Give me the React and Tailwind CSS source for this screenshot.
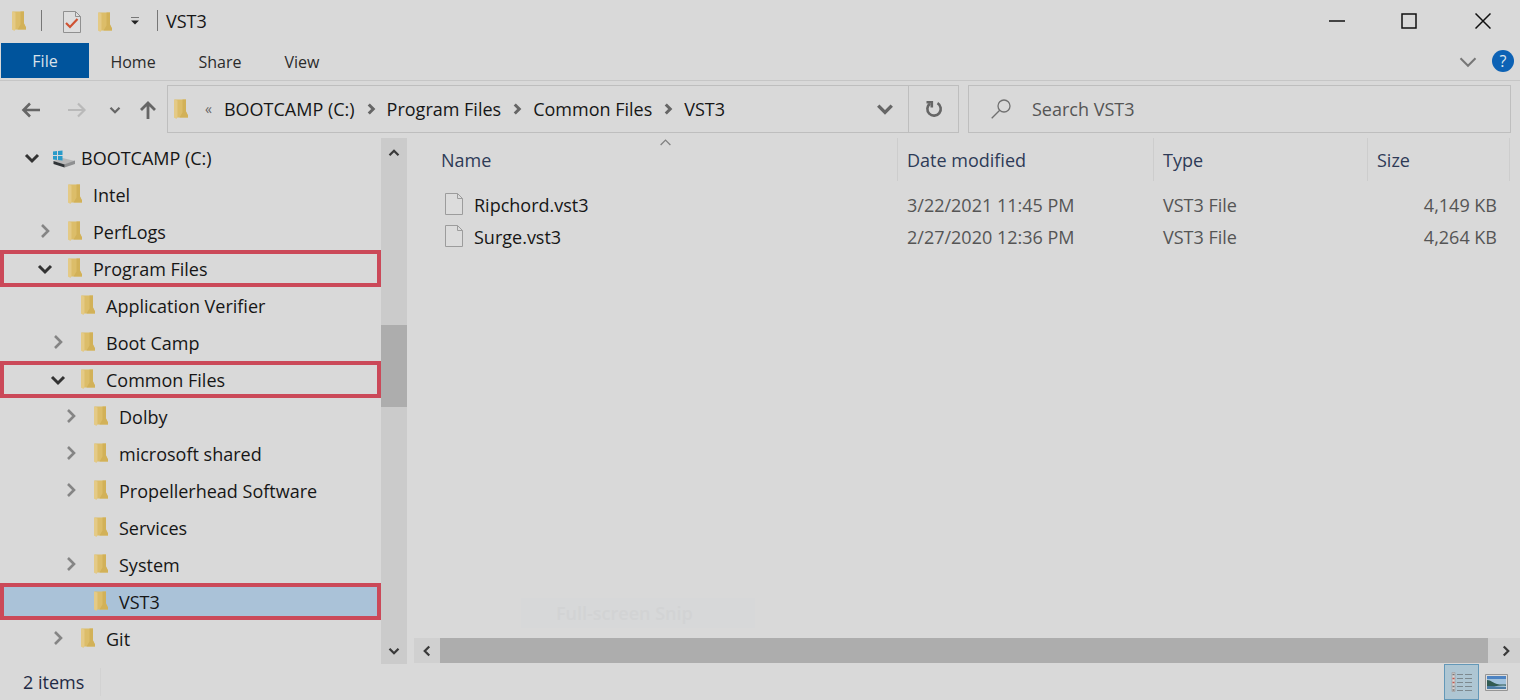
import React from "react";

const TREE = [
  { label: "BOOTCAMP (C:)", level: 0, state: "open", drive: true },
  { label: "Intel", level: 1 },
  { label: "PerfLogs", level: 1, state: "closed" },
  { label: "Program Files", level: 1, state: "open", marked: true },
  { label: "Application Verifier", level: 2 },
  { label: "Boot Camp", level: 2, state: "closed" },
  { label: "Common Files", level: 2, state: "open", marked: true },
  { label: "Dolby", level: 3, state: "closed" },
  { label: "microsoft shared", level: 3, state: "closed" },
  { label: "Propellerhead Software", level: 3, state: "closed" },
  { label: "Services", level: 3 },
  { label: "System", level: 3, state: "closed" },
  { label: "VST3", level: 3, marked: true, selected: true },
  { label: "Git", level: 2, state: "closed" },
];

const FILES = [
  { name: "Ripchord.vst3", date: "3/22/2021 11:45 PM", type: "VST3 File", size: "4,149 KB" },
  { name: "Surge.vst3", date: "2/27/2020 12:36 PM", type: "VST3 File", size: "4,264 KB" },
];

const INDENT = ["pl-6", "pl-[37px]", "pl-[50px]", "pl-[63px]"];

const PATHS = {
  down: "M2 5l6 6 6-6",
  up: "M2 11l6-6 6 6",
  right: "M5 2l6 6-6 6",
  left: "M11 2L5 8l6 6",
};

function Chevron({ dir, className = "size-3", width = 3 }) {
  return (
    <svg viewBox="0 0 16 16" className={`shrink-0 ${className}`} fill="none" stroke="currentColor" strokeWidth={width} aria-hidden="true">
      <path d={PATHS[dir]} />
    </svg>
  );
}

function Folder({ className = "" }) {
  return (
    <svg viewBox="0 0 16 22" className={`h-[22px] w-4 shrink-0 ${className}`} aria-hidden="true">
      <path d="M1.500 1.500h11.500v12l2 4v2H1.500z" fill="#dcbd69" />
      <path d="M9.500 1.500H13v12l2 4v2H6.500l3-5z" fill="#d2b158" />
      <path d="M1 1.500l3.500 1v16L3.500 21 1 19.500z" fill="#e4ca86" />
    </svg>
  );
}

function Drive({ className = "" }) {
  return (
    <svg viewBox="0 0 24 18" className={`h-[18px] w-6 shrink-0 ${className}`} aria-hidden="true">
      <path d="M1.500 11l9-3L23 11l-11 4z" fill="#b9b9b9" />
      <path d="M12 14.500l11-4v3.500l-10.500 3.500z" fill="#8f9091" />
      <path d="M1.500 11l11 3.500v3l-11-3.500z" fill="#2f3336" />
      <path d="M1 1.500l4-.5v4H1zM6 1l4.500-.5V5H6zM1 6h4v4l-4-.5zM6 6h4.500v4.500L6 10z" fill="#2a9bc9" />
    </svg>
  );
}

function Page() {
  return (
    <svg viewBox="0 0 18 22" className="mb-[3px] h-[22px] w-[18px] shrink-0" fill="none" stroke="#9c9c9c" aria-hidden="true">
      <path d="M.5.5h12l5 5v16H.5z" fill="#dcdcdc" />
      <path d="M12.500.5v5h5" />
    </svg>
  );
}

function TitleBar() {
  return (
    <header className="flex h-[43px] items-center pb-0.5">
      <Folder className="ml-[11px]" />
      <span className="ml-[14px] h-[21px] w-px bg-[#777]" />
      <button aria-label="Properties" className="ml-[21px]">
        <svg viewBox="0 0 18 22" className="mt-0.5 h-[22px] w-[18px]" fill="none" aria-hidden="true">
          <path d="M.5.5h12l5 5v16H.5z" fill="#dedede" stroke="#909090" />
          <path d="M12.500.5v5h5" stroke="#909090" />
          <path d="M3 12l4 4 7.500-8" stroke="#cf5232" strokeWidth="2.200" />
        </svg>
      </button>
      <button aria-label="New folder" className="ml-[16px]">
        <Folder className="mt-0.5" />
      </button>
      <button aria-label="Customize Quick Access Toolbar" className="ml-[17px]">
        <svg viewBox="0 0 10 8" className="h-2 w-[10px]" aria-hidden="true">
          <path d="M1 .5h8" stroke="#777" />
          <path d="M1 3.500h8L5 7.500z" fill="#222" />
        </svg>
      </button>
      <span className="ml-[17px] h-[21px] w-px bg-[#777]" />
      <h1 className="ml-2 grow text-lg text-[#161616]">VST3</h1>
      <button aria-label="Minimize" className="flex h-full w-[72px] items-center justify-center">
        <svg viewBox="0 0 16 16" className="size-4" stroke="#111" strokeWidth="1.500" aria-hidden="true"><path d="M0 8h16" /></svg>
      </button>
      <button aria-label="Maximize" className="flex h-full w-[72px] items-center justify-center">
        <svg viewBox="0 0 16 16" className="size-4" fill="none" stroke="#111" strokeWidth="1.500" aria-hidden="true"><path d="M1 1h14v14H1z" /></svg>
      </button>
      <button aria-label="Close" className="flex h-full w-[75px] items-center justify-center">
        <svg viewBox="0 0 16 16" className="size-4" stroke="#111" strokeWidth="1.500" aria-hidden="true"><path d="M.5.5l15 15M15.500.5l-15 15" /></svg>
      </button>
    </header>
  );
}

function Ribbon() {
  return (
    <nav className="flex h-[38px] items-start border-b border-[#c6c6c6] text-base text-[#2b2b2b]">
      <button className="ml-px h-[35px] w-[88px] bg-[#00549c] text-[#d9e2ea]">File</button>
      <button className="h-[38px] w-[88px]">Home</button>
      <button className="h-[38px] w-[86px]">Share</button>
      <button className="h-[38px] w-[78px]">View</button>
      <span className="grow" />
      <button aria-label="Expand the Ribbon" className="mr-[14px] flex h-[37px] items-center text-[#777]">
        <Chevron dir="down" className="size-5" width={1.6} />
      </button>
      <button aria-label="Help" className="mt-[7px] mr-[6px] size-[22px] rounded-full bg-[#0d62b5] text-base leading-[22px] text-[#dfe7ee]">?</button>
    </nav>
  );
}

function AddressRow() {
  const crumbs = ["BOOTCAMP (C:)", "Program Files", "Common Files", "VST3"];
  return (
    <div className="flex h-[57px] items-center pr-[9px] pb-px">
      <div className="flex w-[167px] shrink-0 items-center pt-0.5 text-[#666]">
        <button aria-label="Back" className="ml-[21px]">
          <svg viewBox="0 0 20 16" className="h-4 w-5" fill="none" stroke="currentColor" strokeWidth="2.600" aria-hidden="true"><path d="M2 8h17M9 1.500L2.500 8 9 14.500" /></svg>
        </button>
        <button aria-label="Forward" className="ml-[26px] text-[#b9b9b9]">
          <svg viewBox="0 0 20 16" className="h-4 w-5" fill="none" stroke="currentColor" strokeWidth="2.200" aria-hidden="true"><path d="M1 8h17M11 1.500L17.500 8 11 14.500" /></svg>
        </button>
        <button aria-label="Recent locations" className="ml-[22px]">
          <Chevron dir="down" />
        </button>
        <button aria-label="Up" className="ml-[18px]">
          <svg viewBox="0 0 18 18" className="size-[18px]" fill="none" stroke="currentColor" strokeWidth="2.800" aria-hidden="true"><path d="M9 18V2M2 9l7-7 7 7" /></svg>
        </button>
      </div>
      <div className="flex h-12 grow items-center border border-[#bebebe]">
        <Folder className="ml-[5px]" />
        <span className="mr-3 ml-4 text-sm text-[#666]">«</span>
        <ol className="flex grow items-center text-lg text-[#161616]">
          {crumbs.map((crumb, i) => (
            <li key={crumb} className="flex items-center">
              {i > 0 && <Chevron dir="right" width={4} className="mx-[10px] size-3 text-[#666]" />}
              <button className="whitespace-nowrap">{crumb}</button>
            </li>
          ))}
        </ol>
        <button aria-label="Previous locations" className="flex w-[46px] items-center justify-center text-[#666]">
          <Chevron dir="down" className="size-[18px]" width={3} />
        </button>
        <button aria-label="Refresh" className="flex h-full w-[50px] items-center justify-center border-l border-[#bebebe]">
          <svg viewBox="0 0 18 18" className="size-[18px]" fill="none" stroke="#666" strokeWidth="2.600" aria-hidden="true">
            <path d="M12.500 3.200A6.700 6.700 0 1 1 5 3.600" />
            <path d="M1.500 2.200h5.300v5.300" />
          </svg>
        </button>
      </div>
      <div className="ml-[9px] flex h-12 w-[36%] max-w-[543px] items-center border border-[#bebebe]">
        <svg viewBox="0 0 20 20" className="ml-[22px] size-5 shrink-0" fill="none" stroke="#707070" strokeWidth="1.300" aria-hidden="true">
          <circle cx="13" cy="7" r="6" />
          <path d="M8.700 11.300L.7 19.300" />
        </svg>
        <input type="search" aria-label="Search VST3" placeholder="Search VST3" className="ml-[21px] min-w-0 grow bg-transparent text-lg outline-none placeholder:text-[#555]" />
      </div>
    </div>
  );
}

function Tree() {
  return (
    <aside className="flex w-[407px] shrink-0">
      <ul className="grow pt-px">
        {TREE.map((item) => (
          <li key={item.label}>
            <button
              className={`flex h-[37px] w-full items-center text-lg text-[#161616] ${INDENT[item.level]} ${item.marked ? "ring-4 ring-[#cb4959] ring-inset" : ""} ${item.selected ? "bg-[#aac2d8]" : ""}`}
            >
              <span className="flex w-4 shrink-0 justify-center">
                {item.state === "open" && <Chevron dir="down" className="size-4 text-[#333]" />}
                {item.state === "closed" && <Chevron dir="right" className="mb-0.5 size-4 text-[#858585]" width={2.6} />}
              </span>
              {item.drive ? <Drive className="mt-0.5 mr-[5px] ml-3" /> : <Folder className="mr-[10px] mb-0.5 ml-[14px]" />}
              <span className="whitespace-nowrap">{item.label}</span>
            </button>
          </li>
        ))}
      </ul>
      <div className="flex w-[26px] shrink-0 flex-col bg-[#cbcbcb] text-[#3a3a3a]">
        <button aria-label="Scroll up" className="flex h-[30px] items-center justify-center"><Chevron dir="up" /></button>
        <div className="grow-[157]" />
        <div className="h-[82px] bg-[#adadad]" />
        <div className="grow-[231]" />
        <button aria-label="Scroll down" className="flex h-[26px] items-center justify-center"><Chevron dir="down" /></button>
      </div>
    </aside>
  );
}

function FileList() {
  const head = "h-[43px] border-r border-[#cdcdcd] text-left align-middle font-normal";
  return (
    <main className="relative ml-[7px] flex min-w-0 grow flex-col">
      <div className="grow pr-[10px] pl-4">
        <table className="w-full table-fixed border-separate border-spacing-0 text-lg text-[#555]">
          <colgroup>
            <col />
            <col className="w-[256px]" />
            <col className="w-[214px]" />
            <col className="w-[142px]" />
          </colgroup>
          <thead className="text-[#2e3b57]">
            <tr>
              <th className={`relative pl-[11px] ${head}`}>
                <Chevron dir="up" className="absolute top-[-2px] left-[49%] size-[13px] text-[#808080]" width={1.6} />
                Name
              </th>
              <th className={`pl-[9px] ${head}`}>Date modified</th>
              <th className={`pl-[9px] ${head}`}>Type</th>
              <th className={`pl-[9px] ${head}`}>Size</th>
            </tr>
          </thead>
          <tbody>
            <tr className="h-2" aria-hidden="true"><td colSpan={4} /></tr>
            {FILES.map((file) => (
              <tr key={file.name} className="h-8">
                <td className="pl-[15px]">
                  <span className="flex items-center gap-[11px] text-[#161616]"><Page />{file.name}</span>
                </td>
                <td className="pl-[9px]">{file.date}</td>
                <td className="pl-[9px]">{file.type}</td>
                <td className="pr-[13px] text-right">{file.size}</td>
              </tr>
            ))}
          </tbody>
        </table>
      </div>
      <div className="absolute bottom-9 left-[107px] flex h-[30px] w-[234px] items-center bg-[#d7d8d9] pl-[35px] text-lg font-semibold text-[#d2d3d4]">Full-screen Snip</div>
      <div className="mb-px flex h-[25px] bg-[#d0d0d0] text-[#3a3a3a]">
        <button aria-label="Scroll left" className="flex w-[26px] items-center justify-center"><Chevron dir="left" /></button>
        <div className="grow bg-[#adadad]" />
        <button aria-label="Scroll right" className="flex w-[32px] items-center justify-center pl-1"><Chevron dir="right" /></button>
      </div>
    </main>
  );
}

function StatusBar() {
  return (
    <footer className="flex h-9 items-center">
      <p className="ml-[23px] border-r border-[#d2d2d2] pr-4 text-lg text-[#1f2b45]">2 items</p>
      <span className="grow" />
      <button aria-label="Details view" className="flex h-full w-[35px] items-center justify-center border border-[#6398b8] bg-[#aec6d3]">
        <svg viewBox="0 0 24 22" className="h-[22px] w-6" aria-hidden="true">
          <path d="M2 1.500h3v19H2z" fill="#dcd6d6" stroke="#999" strokeWidth=".6" />
          <path d="M2.500 3.500h2M2.500 15.500h2M2.500 19h2" stroke="#777" strokeWidth="1.500" />
          <path d="M2.500 7.500h2M2.500 11.500h2" stroke="#c0564d" strokeWidth="1.500" />
          <path d="M7 3.500h6M15 3.500h7M7 7.500h6M15 7.500h7M7 11.500h6M15 11.500h7M7 15.500h6M15 15.500h7M7 19.500h6M15 19.500h7" stroke="#7d898f" />
        </svg>
      </button>
      <button aria-label="Large icons view" className="mr-3 ml-[6px]">
        <svg viewBox="0 0 23 17" className="h-[17px] w-[23px]" aria-hidden="true">
          <path d="M.5.5h22v16H.5z" fill="#dcdcdc" stroke="#959595" />
          <path d="M2 2h19v13H2z" fill="#a3c3dc" />
          <path d="M2 2h19v3H2z" fill="#4d83c2" />
          <path d="M2 6c4 0 6 3 10 4 3 .8 6 .5 9 .5V12H2z" fill="#315b52" />
          <path d="M2 12h19v3H2z" fill="#4b7ba3" />
          <path d="M9 12.500c4-1 8-1 12-.8v1.300z" fill="#a9c8dc" />
        </svg>
      </button>
    </footer>
  );
}

export default function App() {
  return (
    <div className="flex min-h-screen flex-col bg-[#d9d9d9] font-['Open_Sans',sans-serif]">
      <TitleBar />
      <Ribbon />
      <AddressRow />
      <div className="flex grow">
        <Tree />
        <FileList />
      </div>
      <StatusBar />
    </div>
  );
}
